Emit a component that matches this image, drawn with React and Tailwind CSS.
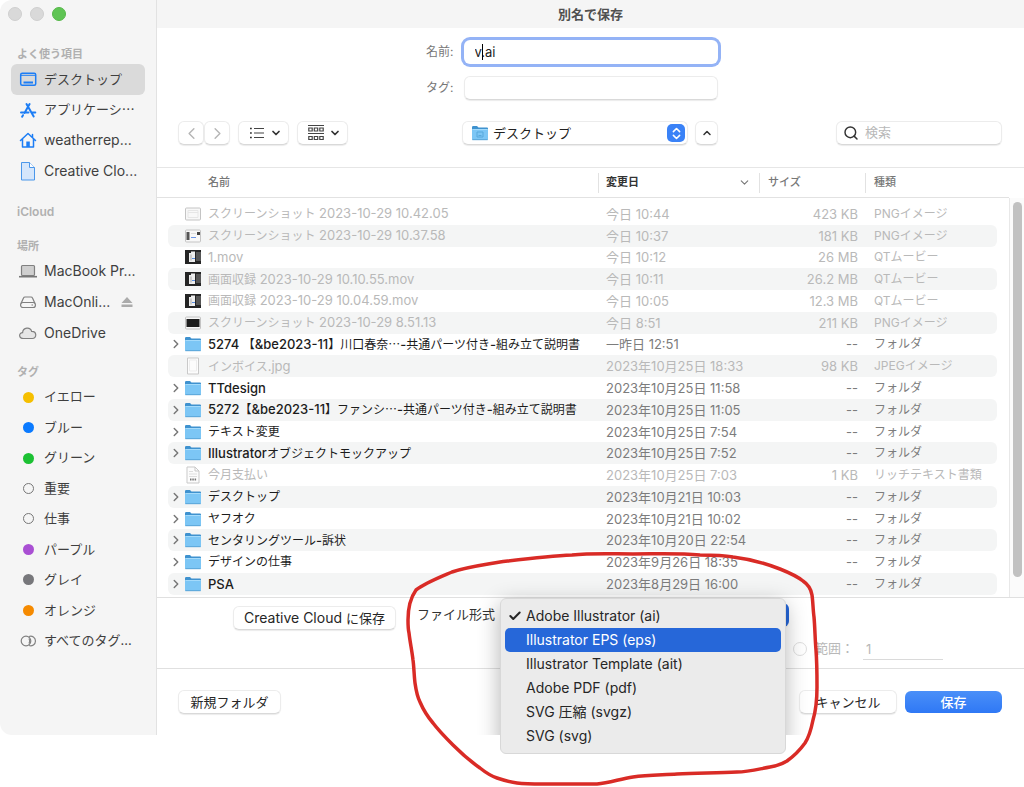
import React, { useState } from 'react'
import clsx from 'clsx'
import { Check, ChevronDown, ChevronLeft, ChevronRight, ChevronUp, ChevronsUpDown, Search } from 'lucide-react'

const files = [
  { name: 'スクリーンショット 2023-10-29 10.42.05', date: '今日 10:44', size: '423 KB', kind: 'PNGイメージ', icon: 'shot' },
  { name: 'スクリーンショット 2023-10-29 10.37.58', date: '今日 10:37', size: '181 KB', kind: 'PNGイメージ', icon: 'window' },
  { name: '1.mov', date: '今日 10:12', size: '26 MB', kind: 'QTムービー', icon: 'movie' },
  { name: '画面収録 2023-10-29 10.10.55.mov', date: '今日 10:11', size: '26.2 MB', kind: 'QTムービー', icon: 'movie' },
  { name: '画面収録 2023-10-29 10.04.59.mov', date: '今日 10:05', size: '12.3 MB', kind: 'QTムービー', icon: 'movie' },
  { name: 'スクリーンショット 2023-10-29 8.51.13', date: '今日 8:51', size: '211 KB', kind: 'PNGイメージ', icon: 'dark' },
  { name: '5274 【&be2023-11】川口春奈⋯-共通パーツ付き-組み立て説明書', date: '一昨日 12:51', folder: true },
  { name: 'インボイス.jpg', date: '2023年10月25日 18:33', size: '98 KB', kind: 'JPEGイメージ', icon: 'page' },
  { name: 'TTdesign', date: '2023年10月25日 11:58', folder: true },
  { name: '5272【&be2023-11】ファンシ⋯-共通パーツ付き-組み立て説明書', date: '2023年10月25日 11:05', folder: true },
  { name: 'テキスト変更', date: '2023年10月25日 7:54', folder: true },
  { name: 'Illustratorオブジェクトモックアップ', date: '2023年10月25日 7:52', folder: true },
  { name: '今月支払い', date: '2023年10月25日 7:03', size: '1 KB', kind: 'リッチテキスト書類', icon: 'rtf' },
  { name: 'デスクトップ', date: '2023年10月21日 10:03', folder: true },
  { name: 'ヤフオク', date: '2023年10月21日 10:02', folder: true },
  { name: 'センタリングツール-訴状', date: '2023年10月20日 22:54', folder: true },
  { name: 'デザインの仕事', date: '2023年9月26日 18:35', folder: true },
  { name: 'PSA', date: '2023年8月29日 16:00', folder: true },
]

const formats = [
  'Adobe Illustrator (ai)',
  'Illustrator EPS (eps)',
  'Illustrator Template (ait)',
  'Adobe PDF (pdf)',
  'SVG 圧縮 (svgz)',
  'SVG (svg)',
]

const tags = [
  { name: 'イエロー', dot: 'bg-[#f5bf00]' },
  { name: 'ブルー', dot: 'bg-[#0a7aff]' },
  { name: 'グリーン', dot: 'bg-[#1cc133]' },
  { name: '重要', dot: 'border border-[#777]' },
  { name: '仕事', dot: 'border border-[#777]' },
  { name: 'パープル', dot: 'bg-[#a94fd3]' },
  { name: 'グレイ', dot: 'bg-[#77777b]' },
  { name: 'オレンジ', dot: 'bg-[#f58a00]' },
]

const raised = 'rounded-md bg-white border border-[#ececec] border-b-[#d9d9d9] shadow-[0_1px_1px_rgba(0,0,0,0.08)]'

// Latin runs are set one size larger than the Japanese around them
function Mixed({ text, latin }) {
  return text.split(/([\x20-\x7e]+)/).map((part, i) =>
    i % 2 === 1 ? <span key={i} className={latin}>{part}</span> : part
  )
}

function FolderIcon({ desktop }) {
  return (
    <svg width="18" height="16" viewBox="0 0 18 16" className="shrink-0">
      <path d="M1 2.200Q1 1 2.200 1H6l1.500 1.400H16q1 0 1 1V8H1Z" fill="#3f92cf" />
      <rect x="1" y="4" width="16" height="11" rx="1" fill="#7cc6f5" />
      <path d="M1.400 4.500h15.200" stroke="#a5dbfb" />
      <path d="M1.300 14.700h15.400" stroke="#5ba6d8" />
      {desktop && <path d="M6 7h6v5H6zM7.500 10.500h3" fill="none" stroke="#57a8dc" />}
    </svg>
  )
}

function FileIcon({ type }) {
  if (type === 'page' || type === 'rtf') {
    return (
      <svg width="18" height="18" viewBox="0 0 18 18" className="shrink-0">
        <path d={type === 'rtf' ? 'M3 1h8l4 4v12H3Z' : 'M3.500 1h11v16h-11Z'} fill="#fcfcfc" stroke="#c9c9c9" />
        {type === 'rtf' && (
          <>
            <path d="M11 1v4h4" fill="none" stroke="#c9c9c9" />
            <path d="M5 5.500h4M5 8h8M5 10.500h8" stroke="#dedede" />
            <path d="M6 13.500h1.500M8.300 13.500h1.500M10.600 13.500h1.500" stroke="#777" strokeWidth="2" />
          </>
        )}
        {type === 'page' && <path d="M5.500 3h7v11h-7z" fill="none" stroke="#ededed" />}
      </svg>
    )
  }
  if (type === 'movie') {
    return (
      <svg width="18" height="16" viewBox="0 0 18 16" className="shrink-0">
        <rect x="1" y="1" width="16" height="14" fill="#252525" />
        <rect x="12" y="3" width="5" height="9" fill="#555" />
        <path d="M5 4h2v-1.500h4V13H5Z" fill="#eee" />
        <path d="M7 5.500v6" stroke="#aaa" />
        <path d="M8 9.500h3" stroke="#5d8fe0" />
      </svg>
    )
  }
  return (
    <svg width="18" height="16" viewBox="0 0 18 16" className="shrink-0">
      <rect x="1.500" y="2" width="15" height="12" rx="1" fill="#f8f8f8" stroke="#c4c4c4" />
      {type === 'shot' && <path d="M4 4.500h10v7H4zM4 6.500h10" fill="none" stroke="#e6e6e6" />}
      {type === 'window' && (
        <>
          <path d="M2.500 4h3v8h-3z" fill="#555" />
          <path d="M13 4h3v3h-3z" fill="#444" />
          <path d="M7 9.500h5" stroke="#6d97e8" />
          <path d="M7 5.500h5" stroke="#ddd" />
        </>
      )}
      {type === 'dark' && <rect x="2.500" y="4" width="13" height="8" fill="#1d1d1d" />}
    </svg>
  )
}

function SidebarIcon({ type }) {
  const blue = { fill: 'none', stroke: '#1c7df5', strokeWidth: 1.5 }
  const gray = { fill: 'none', stroke: '#808080', strokeWidth: 1.2 }
  return (
    <svg width="20" height="20" viewBox="0 0 20 20" className="shrink-0">
      {type === 'desktop' && (
        <>
          <rect x="2.700" y="4.200" width="15" height="12" rx="1.500" {...blue} />
          <path d="M3 6.300h14.500" stroke="#1c7df5" />
          <path d="M5.500 13.500h9.500" stroke="#1c7df5" strokeWidth="2" />
        </>
      )}
      {type === 'apps' && (
        <path d="M8.500 4 15.700 16.500M11.600 4 6.500 13M3 12.500h7.500M13.500 12.500H17.300M5 15.200l-.9 1.500" {...blue} strokeWidth="2" strokeLinecap="round" />
      )}
      {type === 'home' && (
        <>
          <path d="M2.500 10.500 10 3.500l7.500 7M4.500 9v8h11V9M14.500 4.500v3" {...blue} strokeLinejoin="round" strokeLinecap="round" />
          <path d="M8.300 11.500h3.500V17H8.300Z" fill="#1c7df5" />
        </>
      )}
      {type === 'file' && (
        <>
          <path d="M3.500 1.500h8l5 5v12.500h-13Z" fill="#d5e6fb" stroke="#4b97ea" />
          <path d="M11.500 1.500v5h5" fill="#fff" stroke="#4b97ea" />
        </>
      )}
      {type === 'laptop' && (
        <>
          <rect x="3.500" y="4.500" width="13" height="10" rx="1" {...gray} fill="#cfcfcf" />
          <path d="M1 15.700h18" stroke="#777" strokeWidth="1.600" />
        </>
      )}
      {type === 'drive' && (
        <>
          <path d="M3 11.500 5.500 6q.4-1 1.500-1h6q1.100 0 1.500 1L17 11.500" {...gray} />
          <rect x="2.600" y="10.500" width="14.800" height="5" rx="2.300" {...gray} />
          <path d="M13.500 13h1.500" {...gray} />
        </>
      )}
      {type === 'cloud' && (
        <path d="M5.500 15.500C.5 15.500.5 9.800 4.600 9.600 5 4.200 12.300 3.500 13.600 8.400c5.400-.2 5.500 7.100.7 7.100Z" {...gray} fill="#e6e6e6" />
      )}
      {type === 'tags' && (
        <>
          <circle cx="8" cy="10" r="4.800" {...gray} />
          <path d="M11 5.500a4.800 4.800 0 1 1 0 9M11 7.500a4.800 4.800 0 0 1 0 5" {...gray} />
        </>
      )}
    </svg>
  )
}

function SidebarItem({ icon, dot, label, active, latin, children }) {
  return (
    <li className="flex flex-1">
      <a
        href="#"
        className={clsx(
          'flex flex-1 items-center gap-1.5 rounded-md pl-[7px] whitespace-nowrap text-[#3f3f3f]',
          latin ? 'text-sm' : 'text-[13px]',
          active && 'bg-[#dadada]'
        )}
      >
        {icon ? (
          <SidebarIcon type={icon} />
        ) : (
          <span className="flex w-5 shrink-0 justify-center">
            <span className={clsx('size-[11px] rounded-full', dot)} />
          </span>
        )}
        {label}
        {children}
      </a>
    </li>
  )
}

function SidebarHeading({ children, className = 'text-[11px]' }) {
  return <h2 className={clsx('h-5 px-1.5 leading-5 font-semibold text-[#b0b0b0]', className)}>{children}</h2>
}

function Sidebar() {
  return (
    <aside className="w-[157px] shrink-0 rounded-l-xl border-r border-[#e2e2e2] bg-[#f5f5f5] px-[11px]">
      <div className="-ml-[3px] flex h-7 items-center gap-2">
        <button aria-label="閉じる" className="size-3.5 rounded-full border border-[#cfcfcf] bg-[#d9d9d9]" />
        <button aria-label="しまう" className="size-3.5 rounded-full border border-[#cfcfcf] bg-[#d9d9d9]" />
        <button aria-label="拡大" className="size-3.5 rounded-full border border-[#55b848] bg-[#5fc454]" />
      </div>
      <SidebarHeading className="mt-4 text-[11px]">よく使う項目</SidebarHeading>
      <ul className="flex h-[122px] flex-col">
        <SidebarItem icon="desktop" label="デスクトップ" active />
        <SidebarItem icon="apps" label="アプリケーシ⋯" />
        <SidebarItem icon="home" label="weatherrep..." latin />
        <SidebarItem icon="file" label="Creative Clo..." latin />
      </ul>
      <SidebarHeading className="mt-4 text-xs">iCloud</SidebarHeading>
      <SidebarHeading className="mt-3.5 text-[11px]">場所</SidebarHeading>
      <ul className="flex h-[92px] flex-col">
        <SidebarItem icon="laptop" label="MacBook Pr..." latin />
        <SidebarItem icon="drive" label="MacOnli..." latin>
          <svg width="12" height="12" viewBox="0 0 12 12" className="mr-3 ml-auto">
            <path d="M6 1 11.500 7H.5ZM.5 8.500h11v2.500H.5Z" fill="#ababab" />
          </svg>
        </SidebarItem>
        <SidebarItem icon="cloud" label="OneDrive" latin />
      </ul>
      <SidebarHeading className="mt-3.5 text-[11px]">タグ</SidebarHeading>
      <ul className="flex h-[274px] flex-col">
        {tags.map(tag => (
          <SidebarItem key={tag.name} dot={tag.dot} label={tag.name} />
        ))}
        <SidebarItem icon="tags" label="すべてのタグ..." />
      </ul>
    </aside>
  )
}

function NameForm() {
  const [name, setName] = useState('v.ai')
  return (
    <div className="grid grid-cols-[1fr_254px_1fr] items-center gap-x-2.5 gap-y-3 pt-3 text-xs text-[#777]">
      <label htmlFor="name" className="text-right">名前:</label>
      <div className="relative">
        <input
          id="name"
          value={name}
          onChange={e => setName(e.target.value)}
          className="block h-6 w-full rounded-md bg-white px-[11px] text-[13px] text-[#222] ring-[3px] ring-[#94b3f6] outline-none"
        />
        <span className="absolute top-1 left-[18px] h-4 w-px bg-black" />
      </div>
      <label htmlFor="tag" className="col-start-1 text-right">タグ:</label>
      <input id="tag" className={clsx(raised, 'h-6 px-3 text-[13px] outline-none')} />
    </div>
  )
}

function Toolbar() {
  return (
    <div className="mt-[21px] flex items-center pr-[22px] pl-[21px]">
      <div className="flex flex-1 items-center">
        <button aria-label="戻る" className={clsx(raised, 'flex h-6 w-[26px] items-center justify-center')}>
          <ChevronLeft size={19} strokeWidth={1.8} className="text-[#b5b5b5]" />
        </button>
        <button aria-label="進む" className={clsx(raised, 'flex h-6 w-[26px] items-center justify-center')}>
          <ChevronRight size={19} strokeWidth={1.8} className="text-[#b5b5b5]" />
        </button>
        <button aria-label="リスト表示" className={clsx(raised, 'ml-2 flex h-6 w-[51px] items-center justify-between pr-1.5 pl-2.5')}>
          <svg width="16" height="14" viewBox="0 0 16 14">
            <path d="M5 2.500h10M5 7h10M5 11.500h10" stroke="#444" strokeWidth="1.200" />
            <path d="M1 2.500h1.800M1 7h1.800M1 11.500h1.800" stroke="#333" strokeWidth="1.600" />
          </svg>
          <ChevronDown size={12} strokeWidth={3.5} className="text-[#333]" />
        </button>
        <button aria-label="グループ" className={clsx(raised, 'ml-2 flex h-6 w-[51px] items-center justify-between pr-1.5 pl-2.5')}>
          <svg width="16" height="16" viewBox="0 0 16 16" fill="none" stroke="#444">
            <path d="M0 .5h16M0 8.500h16" />
            <path d="M.8 3h3.400v3H.8zM6.300 3h3.400v3H6.300zM11.800 3h3.400v3h-3.400zM.8 11.500h3.400v3H.8zM6.300 11.500h3.400v3H6.300zM11.800 11.500h3.400v3h-3.400z" strokeWidth="1.200" />
          </svg>
          <ChevronDown size={12} strokeWidth={3.5} className="text-[#333]" />
        </button>
      </div>
      <div className="flex w-64 items-center justify-between">
        <div className="relative w-[226px]">
          <select aria-label="場所" className={clsx(raised, 'block h-6 w-full appearance-none pl-[30px] text-[13px] leading-5 text-[#222]')}>
            <option>デスクトップ</option>
          </select>
          <span className="pointer-events-none absolute top-1 left-[9px]">
            <FolderIcon desktop />
          </span>
          <span className="pointer-events-none absolute top-[3px] right-[3px] flex size-[18px] items-center justify-center rounded-[5px] bg-[#3a82f7] text-white">
            <ChevronsUpDown size={15} strokeWidth={2.5} />
          </span>
        </div>
        <button aria-label="折りたたむ" className={clsx(raised, 'flex h-6 w-[23px] items-center justify-center')}>
          <ChevronUp size={12} strokeWidth={3} className="text-[#333]" />
        </button>
      </div>
      <div className="flex flex-1 justify-end">
        <label className={clsx(raised, 'flex h-6 w-[166px] items-center gap-1.5 px-1.5')}>
          <Search size={16} strokeWidth={2.2} className="shrink-0 text-[#333]" />
          <input aria-label="検索" placeholder="検索" className="w-full text-[13px] outline-none placeholder:text-[#b8b8b8]" />
        </label>
      </div>
    </div>
  )
}

function FileRow({ file, striped }) {
  const cell = clsx('p-0', striped && 'bg-[#f4f5f5]')
  const meta = file.folder ? 'text-[#7c7c7c]' : 'text-[#b9b9b9]'
  return (
    <tr>
      <td className="p-0" />
      <td className={clsx(cell, 'rounded-l-md')}>
        <div className={clsx('flex h-4 items-center text-xs leading-4 whitespace-nowrap', file.folder ? 'text-[#1c1c1c]' : 'text-[#b9b9b9]')}>
          <span className="flex w-4 shrink-0 justify-center">
            {file.folder && <ChevronRight size={14} strokeWidth={2.5} className="shrink-0 text-[#777]" />}
          </span>
          {file.folder ? <FolderIcon /> : <FileIcon type={file.icon} />}
          <span className="ml-1.5">
            <Mixed text={file.name} latin={clsx('text-[13px] leading-4', file.folder && 'font-medium')} />
          </span>
        </div>
      </td>
      <td className={clsx(cell, meta, 'pl-2 text-[13px] leading-4 whitespace-nowrap')}>{file.date}</td>
      <td className={clsx(cell, meta, 'pr-[7px] text-right text-[13px] leading-4')}>{file.size || '--'}</td>
      <td className={clsx(cell, meta, 'rounded-r-md pl-[9px] text-xs leading-4 whitespace-nowrap')}>{file.kind || 'フォルダ'}</td>
      <td className="p-0" />
    </tr>
  )
}

function FileList() {
  const th = 'h-[30px] border-b border-[#e2e2e2] p-0 text-left font-medium'
  return (
    <div className="mt-[22px] flex items-start border-t border-[#e6e6e6]">
      <table className="mb-0.5 h-[427px] flex-1 table-fixed border-separate border-spacing-0">
        <colgroup>
          <col className="w-[11px]" />
          <col />
          <col className="w-[161px]" />
          <col className="w-[106px]" />
          <col className="w-[132px]" />
          <col className="w-3" />
        </colgroup>
        <thead className="text-[11px] text-[#777]">
          <tr>
            <th className={th} />
            <th className={clsx(th, 'pl-10')}>名前</th>
            <th className={th}>
              <button className="flex h-5 w-full items-center justify-between border-l border-[#e2e2e2] pr-2 pl-[7px] font-bold text-[#333]">
                変更日
                <ChevronDown size={13} className="text-[#777]" />
              </button>
            </th>
            <th className={th}>
              <div className="flex h-5 items-center border-l border-[#e2e2e2] pl-2">サイズ</div>
            </th>
            <th className={th}>
              <div className="flex h-5 items-center border-l border-[#e2e2e2] pl-2">種類</div>
            </th>
            <th className={th} />
          </tr>
          <tr>
            <td colSpan={6} className="h-[5px] p-0" />
          </tr>
        </thead>
        <tbody>
          {files.map((file, i) => (
            <FileRow key={file.name} file={file} striped={i % 2 === 1} />
          ))}
        </tbody>
      </table>
      <div className="mt-[30px] flex w-[15px] justify-center self-stretch border-l border-[#e8e8e8] bg-[#fbfbfb] pt-1">
        <div className="h-[375px] w-[9px] rounded-full bg-[#c1c1c1]" />
      </div>
    </div>
  )
}

function FormatMenu() {
  const [active, setActive] = useState(1)
  return (
    <>
      {/* the shadow stops at the bottom edge of the dialog */}
      <div className="absolute -top-9 -left-9 h-[169px] w-[357px] overflow-hidden">
        <div className="mx-9 mt-8 h-[154px] rounded-md shadow-[0_6px_22px_rgba(0,0,0,0.3)]" />
      </div>
      <ul role="menu" className="absolute -top-1 left-0 w-[286px] rounded-md border border-[#d8d8d8] bg-[#ebebeb] px-1 py-[5px] text-sm text-[#262626]">
        {formats.map((format, i) => (
          <li key={format}>
            <button
              role="menuitem"
              onMouseEnter={() => setActive(i)}
              className={clsx('flex h-6 w-full items-center rounded-[5px] pl-[3px] text-left', active === i && 'bg-[#2667d9] text-white')}
            >
              <span className="w-[18px]">{i === 0 && <Check size={14} strokeWidth={3.5} />}</span>
              {format}
            </button>
          </li>
        ))}
      </ul>
    </>
  )
}

function Annotation() {
  return (
    <svg width="424" height="247" viewBox="400 540 424 247" className="pointer-events-none absolute -top-[62px] -left-[100px] max-w-none">
      <path
        d="M408 620C408 605 411 597 416 590C425 583 438 578 452 572C467 567 483 565 500 562C525 559 548 556 572 555C592 553 612 554 633 554C656 554 678 553 700 555C712 555 722 555 733 557C750 559 767 564 780 569C790 573 798 577 803 581C809 585 811 589 812 595C813 602 813 610 814 617C815 628 815 639 816 650C817 663 817 675 817 687C817 700 816 710 813 720C811 730 809 737 805 743C800 750 794 756 787 761C782 764 776 766 770 767C759 769 748 772 737 772C717 773 697 773 677 774C662 775 647 775 633 777C620 779 609 783 597 784C579 784 561 784 543 784C534 784 525 784 517 783C509 782 503 780 497 778C491 776 485 772 480 768C470 761 461 753 453 745C446 738 439 731 433 723C427 716 423 709 420 702C417 696 416 690 415 683C414 675 414 667 413 660C412 651 410 642 409 633C408 629 408 624 408 620Z"
        fill="none"
        stroke="#d92b26"
        strokeWidth="3.500"
        strokeLinejoin="round"
      />
    </svg>
  )
}

function FormatPanel() {
  return (
    <div className="flex h-[71px] flex-col border-t border-[#e0e0e0] pl-[76px]">
      <div className="flex items-start pt-2">
        <button className={clsx(raised, 'h-6 w-[163px] text-[13px] leading-5 whitespace-nowrap text-[#262626]')}>
          <Mixed text="Creative Cloud に保存" latin="text-sm leading-5" />
        </button>
        <label htmlFor="format" className="w-[104px] pr-[5px] text-right text-[13px] leading-4 text-[#333]">ファイル形式</label>
        <div className="relative -mt-1 w-[289px]">
          <select id="format" className={clsx(raised, 'h-6 w-full appearance-none border-r-4 border-r-[#2667d9] pl-3 text-sm')}>
            {formats.map(format => (
              <option key={format}>{format}</option>
            ))}
          </select>
          <FormatMenu />
          <Annotation />
        </div>
      </div>
      <div className="mt-2 mr-[81px] flex items-center justify-end text-[13px] text-[#b8b8b8]">
        <input type="radio" id="range" disabled className="size-3.5 appearance-none rounded-full border border-[#dedede] bg-white" />
        <label htmlFor="range" className="ml-2 w-12 whitespace-nowrap">範囲：</label>
        <input aria-label="範囲" defaultValue="1" disabled className="h-[22px] w-20 border-b border-[#dadada] px-[3px]" />
      </div>
    </div>
  )
}

export default function App() {
  return (
    <div className="min-h-screen bg-white font-['Inter','Noto_Sans_CJK_JP',sans-serif]">
      <div className="flex">
        <Sidebar />
        <main className="min-w-0 flex-1">
          <h1 className="h-7 bg-[#f5f5f5] text-center text-[13px] leading-7 font-bold text-[#505050]">別名で保存</h1>
          <NameForm />
          <Toolbar />
          <FileList />
          <FormatPanel />
          <div className="flex h-[67px] items-center border-t border-[#e0e0e0] pr-[22px] pl-[21px] text-[13px] text-[#262626]">
            <button className={clsx(raised, 'h-6 w-[103px] leading-5')}>新規フォルダ</button>
            <button className={clsx(raised, 'ml-auto h-6 w-[98px] leading-5')}>キャンセル</button>
            <button className="ml-2 h-[22px] w-[97px] rounded-md bg-linear-to-b from-[#4a8ff8] to-[#2f78f5] leading-5 font-medium text-white">保存</button>
          </div>
        </main>
      </div>
    </div>
  )
}
